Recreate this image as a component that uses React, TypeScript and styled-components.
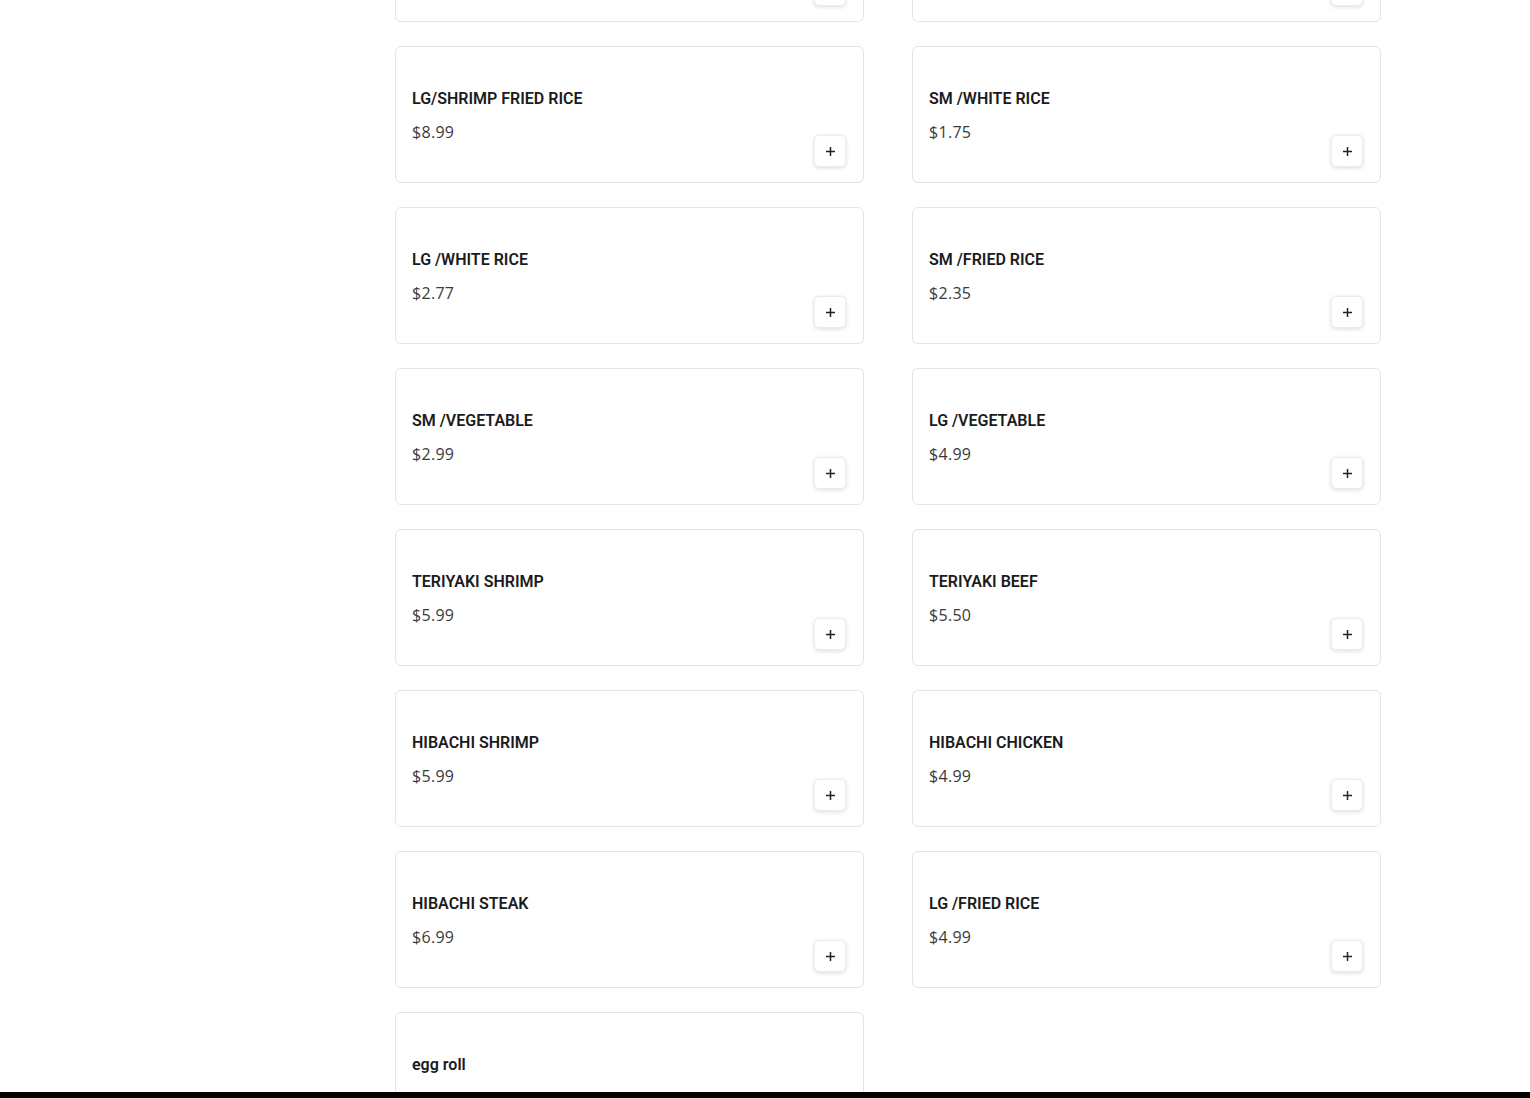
import React from "react";
import styled, { createGlobalStyle } from "styled-components";

type Item = { name: string; price: string };

const items: Item[] = [
    { name: "SM/SHRIMP FRIED RICE", price: "$5.99" },
    { name: "SM/CHICKEN FRIED RICE", price: "$4.99" },
    { name: "LG/SHRIMP FRIED RICE", price: "$8.99" },
    { name: "SM /WHITE RICE", price: "$1.75" },
    { name: "LG /WHITE RICE", price: "$2.77" },
    { name: "SM /FRIED RICE", price: "$2.35" },
    { name: "SM /VEGETABLE", price: "$2.99" },
    { name: "LG /VEGETABLE", price: "$4.99" },
    { name: "TERIYAKI SHRIMP", price: "$5.99" },
    { name: "TERIYAKI BEEF", price: "$5.50" },
    { name: "HIBACHI SHRIMP", price: "$5.99" },
    { name: "HIBACHI CHICKEN", price: "$4.99" },
    { name: "HIBACHI STEAK", price: "$6.99" },
    { name: "LG /FRIED RICE", price: "$4.99" },
    { name: "egg roll", price: "$1.50" },
];

const PlusIcon = () => (
    <svg width="11" height="11" viewBox="0 0 11 11" fill="none">
        <path d="M5.5 1v9M1 5.5h9" stroke="#222" strokeWidth="1.5" />
    </svg>
);

export default function App() {
    return (
        <>
            <GlobalStyle />
            <Page>
                <MenuGrid>
                    {items.map((item, i) => (
                        <Card key={i}>
                            <Title>{item.name}</Title>
                            <Footer>
                                <Price>{item.price}</Price>
                                <AddButton type="button" aria-label="add">
                                    <PlusIcon />
                                </AddButton>
                            </Footer>
                        </Card>
                    ))}
                </MenuGrid>
            </Page>
            <BottomBar />
        </>
    );
}

const GlobalStyle = createGlobalStyle`
    html, body{
        margin:0;
        padding:0;
        background:#fff;
        overflow:hidden;
    }
    *{
        box-sizing:border-box;
    }
`;

const Page = styled.div`
    height:1098px;
    overflow:hidden;
    padding-left:395px;
`;

const MenuGrid = styled.div`
    display:grid;
    grid-template-columns:469px 469px;
    column-gap:48px;
    row-gap:24px;
    margin-top:-115px;
`;

const Card = styled.div`
    height:137px;
    background:#fff;
    border:1px solid #e4e4e4;
    border-radius:6px;
    padding:16px 17px 14px 16px;
    display:flex;
    flex-direction:column;
`;

const Title = styled.h3`
    margin:24px 0 0 0;
    font-family:Roboto, "Liberation Sans", sans-serif;
    font-size:16px;
    font-weight:600;
    line-height:24px;
    color:#1b1b1b;
`;

const Footer = styled.div`
    display:flex;
    justify-content:space-between;
    align-items:flex-start;
    margin-top:9px;
`;

const Price = styled.span`
    font-family:"Open Sans", "DejaVu Sans", sans-serif;
    font-size:16px;
    line-height:24px;
    letter-spacing:0.3px;
    color:#3a3a3a;
`;

const AddButton = styled.button`
    margin-top:15px;
    width:32px;
    height:32px;
    padding:0;
    display:flex;
    align-items:center;
    justify-content:center;
    background:#fff;
    border:1px solid #ececec;
    border-radius:5px;
    box-shadow:0 1px 4px rgba(0,0,0,0.14);
    cursor:pointer;
`;

const BottomBar = styled.div`
    position:fixed;
    left:0;
    right:0;
    bottom:0;
    height:6px;
    background:#000;
`;
